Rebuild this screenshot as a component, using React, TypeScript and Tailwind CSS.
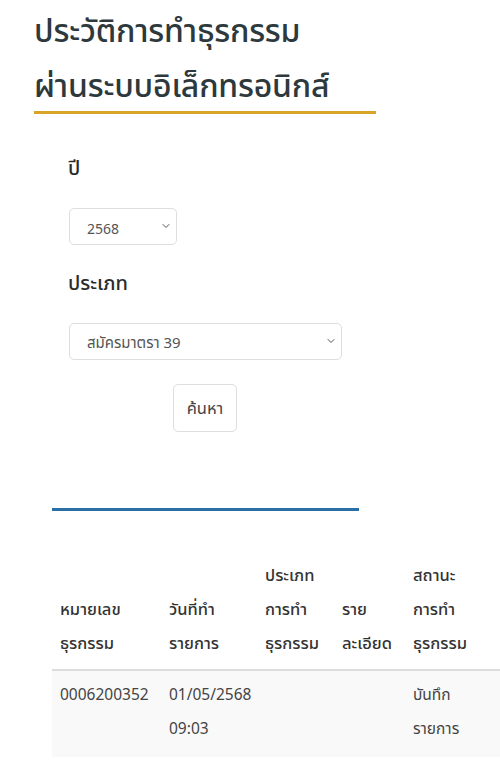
import { ChevronDown } from "lucide-react";

const font = { fontFamily: '"Noto Sans Thai", "Noto Sans", sans-serif' };

function Select({ value, width, size }: { value: string; width: string; size: string }) {
  return (
    <div className={`relative ${width}`}>
      <select
        defaultValue={value}
        className={`w-full h-[37px] appearance-none rounded-[5px] border border-[#dedede] bg-white pl-[17px] pr-8 pt-[5px] text-[#555] outline-none ${size}`}
        style={font}
      >
        <option>{value}</option>
      </select>
      <ChevronDown className="pointer-events-none absolute right-[5px] top-[12px] h-3 w-3 text-[#555]" strokeWidth={2} />
    </div>
  );
}

export default function App() {
  return (
    <div className="min-h-screen w-[500px] overflow-hidden bg-white text-[#2f3b40]" style={font}>
      <div className="px-[34px] pt-[5px]">
        <h1 className="text-[32px] leading-[55px] font-medium tracking-[-0.2px] text-[#2d393d]">
          ประวัติการทำธุรกรรม
          <br />
          ผ่านระบบอิเล็กทรอนิกส์
        </h1>
        <div className="-mt-[4px] h-[3px] w-[342px] bg-[#d9a528]" />
      </div>

      <div className="pl-[68px] pt-[40px]">
        <div className="text-[20px] font-medium leading-[30px] text-[#2b2b2b]">ปี</div>
        <div className="mt-[24px] pl-px">
          <Select value="2568" width="w-[108px]" size="text-[14px]" />
        </div>
        <div className="mt-[24px] text-[20px] font-medium leading-[30px] text-[#2b2b2b]">ประเภท</div>
        <div className="mt-[24px] pl-px">
          <Select value="สมัครมาตรา 39" width="w-[273px]" size="text-[15px]" />
        </div>
        <div className="mt-[24px] pl-[105px]">
          <button className="h-[48px] w-[64px] rounded-[5px] border border-[#dedede] bg-white pt-[2px] text-[16.5px] text-[#444]">
            ค้นหา
          </button>
        </div>
      </div>

      <div className="ml-[52px] mt-[76px] h-[3px] w-[307px] bg-[#2a6fa6]" />

      <table className="ml-[52px] mt-[40px] w-[480px] table-fixed border-collapse text-left leading-[34px] text-[#333]">
        <thead>
          <tr className="border-b-2 border-[#dddddd] align-bottom text-[16.5px]">
            <th className="w-[109px] px-2 py-[8px] font-medium">หมายเลข<br />ธุรกรรม</th>
            <th className="w-[96px] px-2 py-[8px] font-medium">วันที่ทำ<br />รายการ</th>
            <th className="w-[77px] px-2 py-[8px] font-medium">ประเภท<br />การทำ<br />ธุรกรรม</th>
            <th className="w-[71px] px-2 py-[8px] font-medium">ราย<br />ละเอียด</th>
            <th className="w-[127px] px-2 py-[8px] font-medium">สถานะ<br />การทำ<br />ธุรกรรม</th>
          </tr>
        </thead>
        <tbody>
          <tr className="bg-[#f9f9f9] align-top text-[15.5px] text-[#444]">
            <td className="px-2 pt-[8px] pb-[10px]">0006200352</td>
            <td className="px-2 pt-[8px] pb-[10px]">01/05/2568<br />09:03</td>
            <td className="px-2 pt-[8px] pb-[10px]"></td>
            <td className="px-2 pt-[8px] pb-[10px]"></td>
            <td className="px-2 pt-[8px] pb-[10px]">บันทึก<br />รายการ</td>
          </tr>
        </tbody>
      </table>
    </div>
  );
}
